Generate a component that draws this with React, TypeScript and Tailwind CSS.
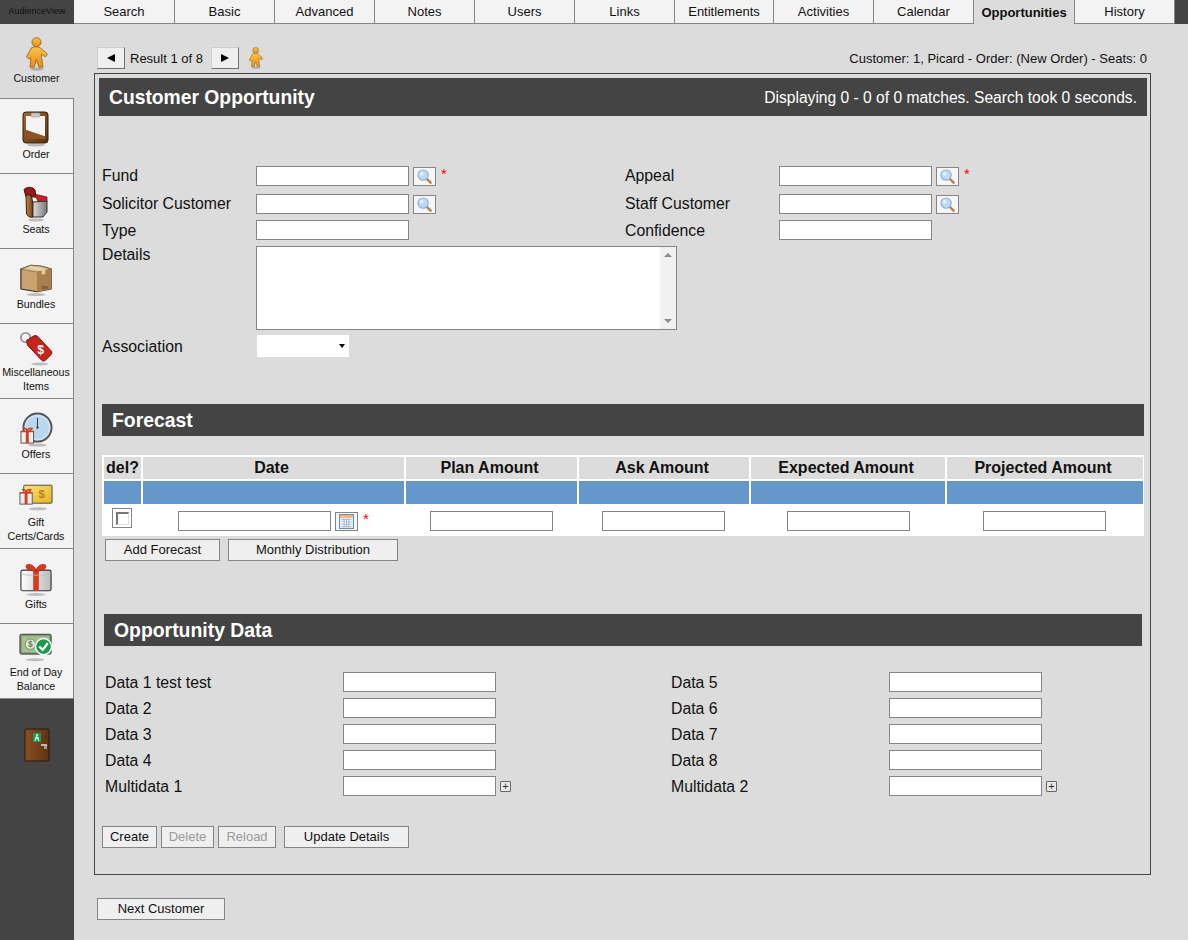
import type { ReactNode } from "react";

const tabs = [
  { label: "Search", w: "w-[101px]" },
  { label: "Basic", w: "w-[100px]" },
  { label: "Advanced", w: "w-[100px]" },
  { label: "Notes", w: "w-[100px]" },
  { label: "Users", w: "w-[100px]" },
  { label: "Links", w: "w-[100px]" },
  { label: "Entitlements", w: "w-[99px]" },
  { label: "Activities", w: "w-[100px]" },
  { label: "Calendar", w: "w-[100px]" },
  { label: "Opportunities", w: "w-[101px]", active: true },
  { label: "History", w: "w-[100px]" },
];

function Shadow({ cx, cy, rx }: { cx: number; cy: number; rx: number }) {
  return <ellipse cx={cx} cy={cy} rx={rx} ry="1.6" fill="#000" opacity="0.22" />;
}

function PersonIcon({ id, className }: { id: string; className: string }) {
  return (
    <svg viewBox="0 0 24 36" className={className}>
      <defs>
        <linearGradient id={id} x1="0" y1="0" x2="0" y2="1">
          <stop offset="0" stopColor="#f9c44a" />
          <stop offset="1" stopColor="#ee8b14" />
        </linearGradient>
      </defs>
      <Shadow cx={12} cy={34} rx={7} />
      <circle cx="11.5" cy="5.5" r="4.8" fill={`url(#${id})`} stroke="#8a5a10" strokeWidth="0.8" />
      <path
        d="M6 11.500c3-1.600 7.500-1.600 10 .4l7 6-2 3.200-4.600-3 0.600 4.900 1.400 9h-4.400l-2.600-8.200-2.400 8.200H4.600l1-10-2.600 1.200L1 21z"
        fill={`url(#${id})`}
        stroke="#8a5a10"
        strokeWidth="0.8"
        strokeLinejoin="round"
      />
    </svg>
  );
}

function OrderIcon() {
  return (
    <svg viewBox="0 0 28 36" className="w-[28px] h-[36px]">
      <defs>
        <linearGradient id="clipb" x1="0" y1="0" x2="1" y2="1">
          <stop offset="0" stopColor="#a9672a" />
          <stop offset="1" stopColor="#5a3212" />
        </linearGradient>
      </defs>
      <Shadow cx={14} cy={34} rx={9} />
      <rect x="1" y="1" width="25" height="31" rx="3" fill="url(#clipb)" stroke="#33200c" />
      <path d="M4 5h19v20.500L4 19z" fill="#f4f4f4" />
      <path d="M4 19l19 6.500v2.500H4z" fill="#8a5425" />
      <rect x="9" y="2" width="9" height="4" rx="1" fill="#c9c9c9" stroke="#888" strokeWidth="0.5" />
    </svg>
  );
}

function SeatIcon() {
  return (
    <svg viewBox="0 0 28 36" className="w-[28px] h-[36px]">
      <defs>
        <linearGradient id="seatw" x1="0" y1="0" x2="1" y2="0">
          <stop offset="0" stopColor="#c98a45" />
          <stop offset="1" stopColor="#6b3d14" />
        </linearGradient>
        <linearGradient id="seatg" x1="0" y1="0" x2="1" y2="0">
          <stop offset="0" stopColor="#dcdcdc" />
          <stop offset="1" stopColor="#777" />
        </linearGradient>
      </defs>
      <Shadow cx={14} cy={34} rx={8} />
      <path d="M2 3.500c3-3 9-3 11 .5l1 7H4z" fill="#a0141c" stroke="#3a1a10" />
      <path d="M12 8l13 3v5l-9-1z" fill="#d01c26" stroke="#3a1a10" strokeWidth="0.7" />
      <path d="M4 9h5l2 8v14c-3 1-6-1-6.500-4z" fill="url(#seatw)" stroke="#3a1a10" />
      <path d="M11 16l14-1v11l-4 5-10 0z" fill="url(#seatg)" stroke="#333" />
    </svg>
  );
}

function BoxIcon() {
  return (
    <svg viewBox="0 0 36 36" className="w-[34px] h-[35px]">
      <Shadow cx={18} cy={34} rx={10} />
      <path d="M2 7l11-4 11 1 10 3v21l-15 3-17-3z" fill="#c9a26d" stroke="#2b2b2b" strokeWidth="1.2" strokeLinejoin="round" />
      <path d="M2 7l17 3 15-3-10-3-11-1z" fill="#e3c595" stroke="#6d5230" strokeWidth="0.6" />
      <path d="M19 10v21l15-3V7z" fill="#a97f4d" />
      <path d="M12 4l16 4v4l-4 1V8.500L9 5z" fill="#f0dcb8" opacity="0.8" />
      <path d="M24 25h7v3h-7z" fill="#6d5230" opacity="0.7" />
    </svg>
  );
}

function TagIcon() {
  return (
    <svg viewBox="0 0 36 38" className="w-[34px] h-[36px]">
      <Shadow cx={22} cy={36} rx={9} />
      <circle cx="7" cy="8" r="5" fill="none" stroke="#999" strokeWidth="2" />
      <path d="M8 11l8-5 3 0 15 16c1 1 1 3 0 4l-6 6c-1 1-3 1-4 0L9 16z" fill="#c8231c" stroke="#5f110d" />
      <text x="23" y="25" textAnchor="middle" fontSize="13" fontWeight="700" fill="#fff" fontFamily="Liberation Sans, sans-serif">$</text>
    </svg>
  );
}

function ClockIcon() {
  return (
    <svg viewBox="0 0 34 36" className="w-[33px] h-[35px]">
      <Shadow cx={18} cy={34} rx={10} />
      <circle cx="18" cy="16" r="14.500" fill="#cfe3f2" stroke="#555" strokeWidth="2" />
      <circle cx="18" cy="16" r="11.500" fill="#b9d7ee" />
      <path d="M18 6v10" stroke="#333" strokeWidth="1" />
      <circle cx="18" cy="16" r="1.200" fill="#333" />
      <rect x="1" y="20" width="13" height="12" fill="#eee" stroke="#555" />
      <rect x="6" y="20" width="3" height="12" fill="#d23a22" />
      <path d="M1 20h13M3 17c2-1 4 0 4.500 3 .5-3 3-4 5-3l-3 3" fill="none" stroke="#d23a22" strokeWidth="1.500" />
    </svg>
  );
}

function GiftCardIcon() {
  return (
    <svg viewBox="0 0 36 28" className="w-[34px] h-[27px]">
      <defs>
        <linearGradient id="cardg" x1="0" y1="0" x2="1" y2="1">
          <stop offset="0" stopColor="#f7e27a" />
          <stop offset="1" stopColor="#eab31f" />
        </linearGradient>
      </defs>
      <Shadow cx={20} cy={26} rx={10} />
      <rect x="5" y="1" width="30" height="19" rx="1" fill="url(#cardg)" stroke="#444" />
      <text x="24" y="15" textAnchor="middle" fontSize="12" fontWeight="700" fill="#b5841c" fontFamily="Liberation Sans, sans-serif">$</text>
      <rect x="1" y="9" width="13" height="12" fill="#eee" stroke="#555" />
      <rect x="6" y="9" width="3" height="12" fill="#d23a22" />
      <path d="M1 9h13M3 6c2-1 4 0 4.500 3 .5-3 3-4 5-3l-3 3" fill="none" stroke="#d23a22" strokeWidth="1.500" />
    </svg>
  );
}

function GiftIcon() {
  return (
    <svg viewBox="0 0 34 36" className="w-[32px] h-[35px]">
      <defs>
        <linearGradient id="giftb" x1="0" y1="0" x2="1" y2="0">
          <stop offset="0" stopColor="#fff" />
          <stop offset="1" stopColor="#bbb" />
        </linearGradient>
      </defs>
      <Shadow cx={17} cy={34} rx={10} />
      <path d="M1 10c0-1 1-2 2-2h28c1 0 2 1 2 2v18c0 1-1 2-2 2H3c-1 0-2-1-2-2z" fill="url(#giftb)" stroke="#333" strokeWidth="1.200" />
      <path d="M14 8h6v22h-6z" fill="#d9391f" />
      <path d="M1.500 12c5 2 26 2 31 0" fill="none" stroke="#bbb" strokeWidth="0.800" />
      <path d="M7 2.500c4-2 8 1 10 5 2-4 6-7 10-5 2 3-1 6.500-10 6.500S5 5.500 7 2.500z" fill="#d9391f" stroke="#8c1f10" strokeWidth="0.600" />
    </svg>
  );
}

function BillIcon() {
  return (
    <svg viewBox="0 0 36 30" className="w-[34px] h-[29px]">
      <Shadow cx={17} cy={28} rx={10} />
      <rect x="1" y="1" width="33" height="21" rx="1.500" fill="#7f9f6e" stroke="#333" />
      <rect x="3" y="3" width="29" height="17" fill="#a3bf93" />
      <circle cx="12" cy="11.500" r="5.500" fill="#e2ebdc" stroke="#6e8f5c" />
      <text x="12" y="15" textAnchor="middle" fontSize="9" fontWeight="700" fill="#5b7a4a" fontFamily="Liberation Sans, sans-serif">$</text>
      <circle cx="26" cy="14" r="8.500" fill="#1d9a4c" stroke="#fff" strokeWidth="1.500" />
      <path d="M21.500 14l3.500 3.500 5.500-7" fill="none" stroke="#fff" strokeWidth="2.400" />
    </svg>
  );
}

function DoorIcon() {
  return (
    <svg viewBox="0 0 26 34" className="w-[26px] h-[34px]">
      <defs>
        <linearGradient id="doorg" x1="0" y1="0" x2="1" y2="0">
          <stop offset="0" stopColor="#8a4f22" />
          <stop offset="1" stopColor="#5e3213" />
        </linearGradient>
      </defs>
      <rect x="1" y="1" width="24" height="32" rx="1" fill="url(#doorg)" stroke="#2a180a" />
      <rect x="9" y="5" width="8" height="9" fill="#1a9a55" />
      <circle cx="13" cy="7" r="1" fill="#fff" />
      <path d="M13 8l-2 5M13 9l2 4M11 10h4" stroke="#fff" strokeWidth="1" />
      <rect x="17" y="16" width="6" height="2" fill="#bbb" />
      <rect x="20" y="18" width="3" height="3" fill="#999" />
    </svg>
  );
}

function LensIcon() {
  return (
    <svg viewBox="0 0 16 16" className="w-[15px] h-[15px]">
      <path d="M10.500 10.500l4 4" stroke="#b9803f" strokeWidth="2.600" strokeLinecap="round" />
      <circle cx="6.500" cy="6.500" r="5.500" fill="#bcd8f4" stroke="#8fb2d8" strokeWidth="1.200" />
      <circle cx="5" cy="5" r="2" fill="#e6f1fb" />
    </svg>
  );
}

function CalendarIcon() {
  return (
    <svg viewBox="0 0 16 16" className="w-[15px] h-[15px]">
      <rect x="0.500" y="0.500" width="15" height="15" fill="#dfeaf5" stroke="#5b8ab8" />
      <rect x="1" y="1" width="14" height="3" fill="#f3b27a" />
      <path d="M3 6h10v7.500H3z" fill="#fff" />
      <path d="M3 6h10M3 8.500h10M3 11h10M3 13.500h10M5.500 6v7.500M8 6v7.500M10.500 6v7.500" stroke="#7f9dbb" strokeWidth="0.700" />
    </svg>
  );
}

const sideItems: { label: ReactNode; icon: ReactNode; two?: boolean }[] = [
  { label: "Order", icon: <OrderIcon /> },
  { label: "Seats", icon: <SeatIcon /> },
  { label: "Bundles", icon: <BoxIcon /> },
  { label: <>Miscellaneous<br />Items</>, icon: <TagIcon />, two: true },
  { label: "Offers", icon: <ClockIcon /> },
  { label: <>Gift<br />Certs/Cards</>, icon: <GiftCardIcon />, two: true },
  { label: "Gifts", icon: <GiftIcon /> },
  { label: <>End of Day<br />Balance</>, icon: <BillIcon />, two: true },
];

function Input({ className = "w-[153px]" }: { className?: string }) {
  return <input className={`${className} h-[20px] shrink-0 bg-white border border-[#858585] outline-none`} />;
}

function Star({ className = "-mt-[5px]" }: { className?: string }) {
  return <span className={`${className} text-[15px] leading-none text-[#f00] ml-[5px]`}>*</span>;
}

function Lens({ star }: { star?: boolean }) {
  return (
    <>
      <button className="ml-[4px] mt-px w-[23px] h-[19px] bg-[#f6f6f6] border border-[#858585] flex items-center justify-center">
        <LensIcon />
      </button>
      {star && <Star />}
    </>
  );
}

function Btn({ className, disabled, children }: { className: string; disabled?: boolean; children: ReactNode }) {
  return (
    <button
      className={`${className} h-[22px] shrink-0 bg-[#efefef] border border-[#858585] text-[13px] ${disabled ? "text-[#9a9a9a]" : "text-[#111]"}`}
    >
      {children}
    </button>
  );
}

function Label({ className, children }: { className: string; children: ReactNode }) {
  return <div className={`${className} shrink-0 text-[15.8px] leading-[20px] text-[#111]`}>{children}</div>;
}

function SectionBar({ className, children }: { className: string; children: ReactNode }) {
  return (
    <div className={`${className} h-[32px] flex items-center pt-px bg-[#444444] text-white font-bold text-[19.4px]`}>
      {children}
    </div>
  );
}

function Arrow({ left }: { left?: boolean }) {
  return (
    <button className="w-[28px] h-[22px] bg-[#efefef] border border-t-[#cfcfcf] border-l-[#cfcfcf] border-r-[#707070] border-b-[#707070] flex items-center justify-center">
      <span className={`block w-0 h-0 border-y-[4.5px] border-y-transparent ${left ? "border-r-[8px] border-r-black" : "border-l-[8px] border-l-black"}`} />
    </button>
  );
}

function DataRow({ label, right, last }: { label: string; right: string; last?: boolean }) {
  const plus = (
    <span className="ml-[4px] w-[11px] h-[11px] border border-[#666] rounded-[1px] flex items-center justify-center bg-[#e8e8e8] text-[11px] leading-none text-[#333]">
      +
    </span>
  );
  return (
    <div className={`flex items-center h-[20px] ${last ? "" : "mb-[6px]"}`}>
      <div className="flex items-center w-[566px] shrink-0">
        <Label className="w-[238px] mt-[2px]">{label}</Label>
        <Input />
        {last && plus}
      </div>
      <Label className="w-[218px] mt-[2px]">{right}</Label>
      <Input />
      {last && plus}
    </div>
  );
}

const headCell = "bg-[#dcdcdc] h-[22px] flex items-center justify-center text-[16px] font-bold text-[#111]";
const blueCell = "bg-[#6597cb] h-[23px]";
const rowCell = "bg-white h-[28px] flex items-start justify-center pt-[5px]";

export default function App() {
  return (
    <div className="flex w-[1188px] h-[940px] overflow-hidden bg-[#dcdcdc] font-['Liberation_Sans',Arial,sans-serif] text-[#111]">
      {/* Left nav */}
      <div className="w-[74px] shrink-0 flex flex-col bg-[#444444]">
        <div className="h-[24px] flex items-center justify-center text-[9px] text-[#111]">AudienceView</div>
        <div className="h-[75px] bg-[#dcdcdc] border-b border-[#858585] flex flex-col items-center pt-[13px] pr-px">
          <PersonIcon id="person-big" className="w-[24px] h-[34px]" />
          <div className="text-[10.67px] leading-[14px]">Customer</div>
        </div>
        {sideItems.map((item, i) => (
          <div
            key={i}
            className={`h-[75px] bg-[#f3f3f3] border-r border-b border-[#858585] flex flex-col items-center pr-px ${item.two ? "pt-[6px]" : "pt-[12px]"}`}
          >
            <div className={`flex items-center justify-center ${item.two ? "h-[35px]" : "h-[36px]"}`}>{item.icon}</div>
            <div className="text-[10.67px] leading-[14px] text-center whitespace-nowrap">{item.label}</div>
          </div>
        ))}
        <div className="flex justify-center pt-[29px]">
          <DoorIcon />
        </div>
      </div>

      <div className="flex-1 flex flex-col min-w-0">
        {/* Tabs */}
        <div className="h-[24px] flex shrink-0">
          {tabs.map((t) => (
            <div
              key={t.label}
              className={`${t.w} flex items-center justify-center text-[13px] border-r border-[#858585] ${
                t.active ? "bg-[#dcdcdc] font-bold pt-px" : "bg-[#f3f3f3] border-b"
              }`}
            >
              {t.label}
            </div>
          ))}
          <div className="flex-1 bg-[#444444]" />
        </div>

        {/* Result nav */}
        <div className="flex items-center h-[22px] mt-[23px] pl-[23px] pr-[41px]">
          <Arrow left />
          <span className="text-[13px] ml-[5px] w-[81px] mt-px">Result 1 of 8</span>
          <Arrow />
          <PersonIcon id="person-small" className="w-[16px] h-[22px] ml-[9px]" />
          <span className="ml-auto text-[13px] mt-px">Customer: 1, Picard - Order: (New Order) - Seats: 0</span>
        </div>

        {/* Main box */}
        <div className="ml-[20px] mt-[4px] w-[1057px] h-[802px] border border-[#444444] p-[4px]">
          <div className="w-[1048px] h-[38px] bg-[#444444] text-white flex items-center justify-between px-[10px] pt-[2px]">
            <span className="font-bold text-[19.3px]">Customer Opportunity</span>
            <span className="text-[15.6px]">Displaying 0 - 0 of 0 matches. Search took 0 seconds.</span>
          </div>

          <div className="pl-[3px]">
            <div className="flex items-center h-[20px] mt-[50px] mb-[8px]">
              <div className="flex items-center w-[523px] shrink-0">
                <Label className="w-[154px] -mt-px">Fund</Label>
                <Input />
                <Lens star />
              </div>
              <Label className="w-[154px] -mt-px">Appeal</Label>
              <Input />
              <Lens star />
            </div>
            <div className="flex items-center h-[20px] mb-[6px]">
              <div className="flex items-center w-[523px] shrink-0">
                <Label className="w-[154px] -mt-px">Solicitor Customer</Label>
                <Input />
                <Lens />
              </div>
              <Label className="w-[154px] -mt-px">Staff Customer</Label>
              <Input />
              <Lens />
            </div>
            <div className="flex items-center h-[20px] mb-[6px]">
              <div className="flex items-center w-[523px] shrink-0">
                <Label className="w-[154px] mt-[2px]">Type</Label>
                <Input />
              </div>
              <Label className="w-[154px] mt-[2px]">Confidence</Label>
              <Input />
            </div>
            <div className="flex mb-[5px]">
              <Label className="w-[154px] -mt-px">Details</Label>
              <div className="w-[421px] h-[84px] border border-[#858585] bg-white flex justify-end">
                <div className="w-[16px] bg-[#f1f1f1] flex flex-col items-center justify-between py-[6px]">
                  <span className="block w-0 h-0 border-x-[4px] border-x-transparent border-b-[4px] border-b-[#8a8a8a]" />
                  <span className="block w-0 h-0 border-x-[4px] border-x-transparent border-t-[4px] border-t-[#8a8a8a]" />
                </div>
              </div>
            </div>
            <div className="flex items-center h-[22px]">
              <Label className="w-[155px] mt-[2px]">Association</Label>
              <div className="w-[92px] h-[22px] bg-white flex items-center justify-end pr-[4px]">
                <span className="block w-0 h-0 border-x-[3.5px] border-x-transparent border-t-[4px] border-t-black" />
              </div>
            </div>

            {/* Forecast */}
            <SectionBar className="mt-[47px] w-[1042px] pl-[10px]">Forecast</SectionBar>
            <div className="mt-[19px] w-[1042px] bg-white p-[2px] grid grid-cols-[37px_261px_171px_170px_194px_196px] gap-[2px]">
              <div className={headCell}>del?</div>
              <div className={`${headCell} pr-[4px]`}>Date</div>
              <div className={`${headCell} pr-[4px]`}>Plan Amount</div>
              <div className={`${headCell} pr-[4px]`}>Ask Amount</div>
              <div className={`${headCell} pr-[4px]`}>Expected Amount</div>
              <div className={`${headCell} pr-[4px]`}>Projected Amount</div>
              <div className={blueCell} />
              <div className={blueCell} />
              <div className={blueCell} />
              <div className={blueCell} />
              <div className={blueCell} />
              <div className={blueCell} />
              <div className={`${rowCell} pr-[2px]`}>
                <div className="w-[20px] h-[20px] -mt-[3px] border border-[#858585] pl-[3px] pt-[3px]">
                  <div className="w-[13px] h-[13px] border-t-2 border-l-2 border-[#777] border-r border-b border-r-[#ddd] border-b-[#ddd]" />
                </div>
              </div>
              <div className={rowCell}>
                <Input />
                <button className="ml-[4px] mt-px w-[23px] h-[19px] bg-[#f6f6f6] border border-[#858585] flex items-center justify-center">
                  <CalendarIcon />
                </button>
                <Star className="mt-0" />
              </div>
              <div className={rowCell}><Input className="w-[123px]" /></div>
              <div className={`${rowCell} pr-[2px]`}><Input className="w-[123px]" /></div>
              <div className={rowCell}><Input className="w-[123px]" /></div>
              <div className={`${rowCell} pr-[2px]`}><Input className="w-[123px]" /></div>
            </div>
            <div className="flex mt-[3px] ml-[3px] gap-[8px]">
              <Btn className="w-[115px]">Add Forecast</Btn>
              <Btn className="w-[170px]">Monthly Distribution</Btn>
            </div>

            {/* Opportunity data */}
            <SectionBar className="mt-[53px] ml-[2px] w-[1038px] pl-[10px]">Opportunity Data</SectionBar>
            <div className="mt-[26px] ml-[3px]">
              <DataRow label="Data 1 test test" right="Data 5" />
              <DataRow label="Data 2" right="Data 6" />
              <DataRow label="Data 3" right="Data 7" />
              <DataRow label="Data 4" right="Data 8" />
              <DataRow label="Multidata 1" right="Multidata 2" last />
            </div>
            <div className="flex mt-[30px]">
              <Btn className="w-[55px]">Create</Btn>
              <Btn className="w-[53px] ml-[4px]" disabled>Delete</Btn>
              <Btn className="w-[58px] ml-[4px]" disabled>Reload</Btn>
              <Btn className="w-[125px] ml-[8px]">Update Details</Btn>
            </div>
          </div>
        </div>

        <div className="mt-[21px] ml-[23px]">
          <Btn className="w-[128px]">Next Customer</Btn>
        </div>
      </div>
    </div>
  );
}
